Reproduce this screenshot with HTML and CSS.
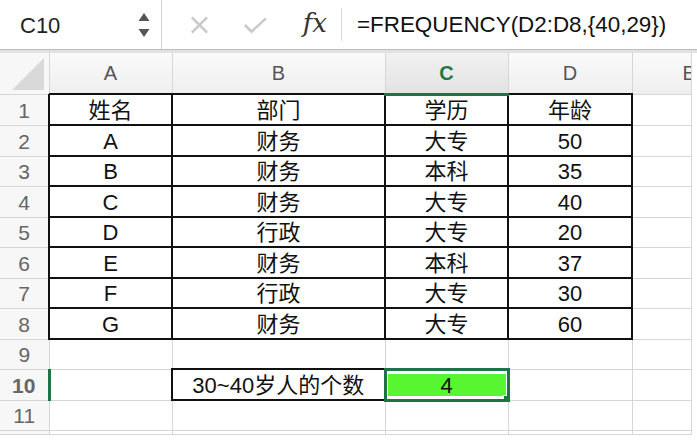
FILE: index.html
```html
<!DOCTYPE html>
<html lang="zh-CN">
<head>
    <meta charset="UTF-8">
    <title>FREQUENCY</title>
    <link rel="stylesheet" href="styles.css">
</head>
<body>

    <div class="formula-bar">
        <div class="name-box">
            <span class="cell-ref">C10</span>
            <span class="spin">
                <svg width="12" height="30" viewBox="0 0 12 30"><path d="M6 3 L11.5 11 H0.5 Z M0.5 19 H11.5 L6 27 Z" fill="#555"/></svg>
            </span>
        </div>
        <div class="bar-icons">
            <svg class="ico" width="24" height="24" viewBox="0 0 24 24"><path d="M4 4 L20 20 M20 4 L4 20" stroke="#c9c9c9" stroke-width="2.6" fill="none"/></svg>
            <svg class="ico" width="28" height="24" viewBox="0 0 28 24"><path d="M3 12 L10 19 L25 5" stroke="#c9c9c9" stroke-width="2.6" fill="none"/></svg>
            <span class="fx">fx</span>
        </div>
        <div class="formula">=FREQUENCY(D2:D8,{40,29})</div>
    </div>
    <div class="bar-edge"></div>

    <table class="sheet">
        <colgroup>
            <col style="width:49px"><col style="width:123px"><col style="width:213px"><col style="width:123px"><col style="width:124px"><col>
        </colgroup>
        <tr class="head">
            <th class="corner"><span class="tri"></span></th>
            <th>A</th><th>B</th><th class="active">C</th><th>D</th><th class="clip">E</th>
        </tr>
        <tr class="r31"><th>1</th><td class="b">姓名</td><td class="b">部门</td><td class="b">学历</td><td class="b">年龄</td><td></td></tr>
        <tr class="r31"><th>2</th><td class="b">A</td><td class="b">财务</td><td class="b">大专</td><td class="b">50</td><td></td></tr>
        <tr class="r30"><th>3</th><td class="b">B</td><td class="b">财务</td><td class="b">本科</td><td class="b">35</td><td></td></tr>
        <tr class="r31"><th>4</th><td class="b">C</td><td class="b">财务</td><td class="b">大专</td><td class="b">40</td><td></td></tr>
        <tr class="r30"><th>5</th><td class="b">D</td><td class="b">行政</td><td class="b">大专</td><td class="b">20</td><td></td></tr>
        <tr class="r31"><th>6</th><td class="b">E</td><td class="b">财务</td><td class="b">本科</td><td class="b">37</td><td></td></tr>
        <tr class="r30"><th>7</th><td class="b">F</td><td class="b">行政</td><td class="b">大专</td><td class="b">30</td><td></td></tr>
        <tr class="r31"><th>8</th><td class="b">G</td><td class="b">财务</td><td class="b">大专</td><td class="b">60</td><td></td></tr>
        <tr class="r30"><th>9</th><td></td><td></td><td></td><td></td><td></td></tr>
        <tr class="r31"><th class="active-row">10</th><td></td><td class="b">30~40岁人的个数</td><td class="sel"><span class="fill">4</span><span class="handle"></span></td><td></td><td></td></tr>
        <tr class="r30"><th>11</th><td></td><td></td><td></td><td></td><td></td></tr>
        <tr class="r4"><th></th><td></td><td></td><td></td><td></td><td></td></tr>
    </table>

</body>
</html>
```

FILE: styles.css
```css
body { margin: 0; background: #fff; font-family: "Liberation Sans", "Noto Sans CJK SC", sans-serif; color: #111; width: 697px; height: 447px; overflow: hidden; }

.formula-bar { display: flex; align-items: center; height: 49px; border-bottom: 1px solid #bcbcbc; }
.name-box { width: 162px; height: 49px; display: flex; align-items: center; justify-content: space-between; padding: 0 10px 0 20px; box-sizing: border-box; border-right: 1px solid #d6d6d6; }
.cell-ref { font-size: 22px; color: #222; padding-top: 2px; }
.spin { display: flex; margin-right: 1px; }
.bar-icons { display: flex; align-items: center; width: 180px; padding-left: 26px; box-sizing: border-box; gap: 31px; }
.fx { font-family: "DejaVu Serif", "Liberation Serif", serif; font-style: italic; font-size: 26px; color: #333; padding-bottom: 3px; padding-right: 14px; border-right: 1px solid #d6d6d6; height: 30px; line-height: 30px; margin-left: 3px; }
.formula { font-size: 22.4px; padding-left: 15px; color: #111; }
.bar-edge { height: 3px; background: #e2e2e2; }

.sheet { border-collapse: collapse; table-layout: fixed; width: 692px; }
.sheet th, .sheet td { border: 1px solid #d6d6d6; padding: 2px 0 0; text-align: center; font-size: 22px; line-height: 22px; font-weight: normal; overflow: hidden; white-space: nowrap; }
.sheet tr > th:first-child { background: #f7f7f7; color: #666; font-size: 21px; border-left: none; }
.head { height: 41px; }
.head th { background: linear-gradient(#fafafa, #eeeeee); color: #555; font-size: 20px; border-top: none; padding-top: 0; }
.head .clip { text-align: left; padding-left: 50px; }
.corner { position: relative; }
.tri { position: absolute; right: 5px; bottom: 4px; width: 0; height: 0; border-left: 32px solid transparent; border-bottom: 32px solid #d9d9d9; }
.head .active { color: #1f7a43; font-weight: bold; border-bottom: 3px solid #217346; background: linear-gradient(#f1f1f1, #e2e2e2); }
.sheet th.active-row { color: #1f7a43; font-weight: bold; border-right: 3px solid #217346; background: #ececec; }

.r31 { height: 31px; }
.r30 { height: 30px; }
.r4 { height: 4px; }
.r4 > * { border-bottom: none; }

.sheet td.b { border: 2px solid #111; }

.sheet td.sel { position: relative; border: 3px solid #217346; padding: 1px; background: #fff; }
.fill { display: block; background: #58f531; height: 22px; line-height: 24px; }
.handle { position: absolute; right: -5px; bottom: -5px; width: 7px; height: 7px; background: #217346; border: 1px solid #fff; }
```
